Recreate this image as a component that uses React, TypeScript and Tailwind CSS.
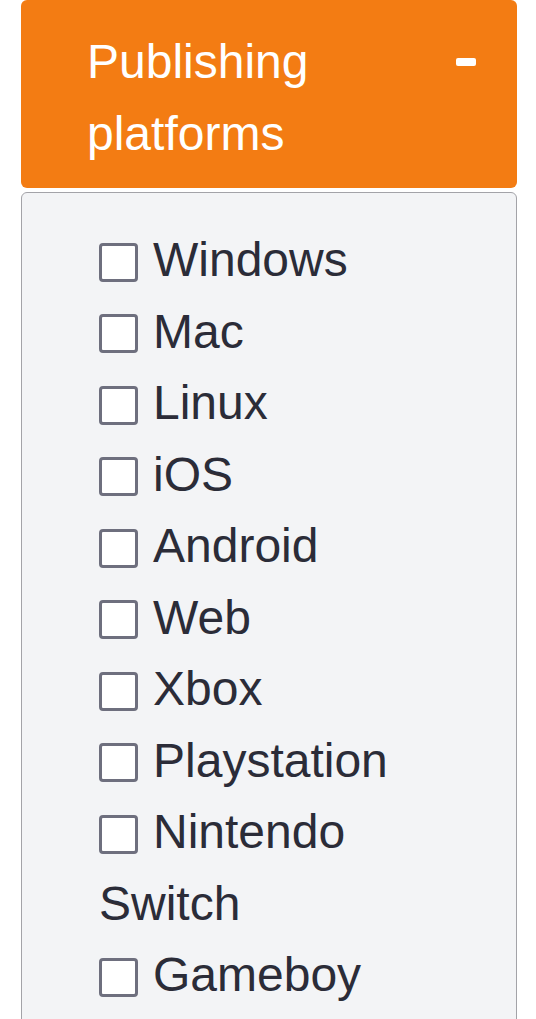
import React from 'react';

const PLATFORMS = [
    'Windows',
    'Mac',
    'Linux',
    'iOS',
    'Android',
    'Web',
    'Xbox',
    'Playstation',
    'Nintendo Switch',
    'Gameboy',
];

const App: React.FC = () => {
    return (
        <div className="min-h-screen bg-white pl-[21px] pr-[19px] font-['Liberation_Sans',Arial,sans-serif]">
            <div className="flex items-start justify-between rounded-[6px] bg-[#f37c13] pl-[66px] pr-[41px] pt-[26px] pb-[18px] text-[48px] leading-[72px] text-white">
                <h2 className="w-[260px]">Publishing platforms</h2>
                <span className="mt-[32px] block h-[8px] w-[20px] rounded-[2px] bg-white" aria-label="-"></span>
            </div>
            <div className="mt-[4px] rounded-t-[6px] border border-[#a3a3a8] bg-[#f3f4f6] pl-[77px] pr-[77px] pt-[31px] pb-[31px]">
                <ul className="text-[48px] leading-[71.5px] text-[#2b2c38]">
                    {PLATFORMS.map((name) => (
                        <li key={name}>
                            <label>
                                <span className="relative -top-[1px] mr-[15px] inline-block h-[39px] w-[39px] rounded-[4px] border-[3px] border-[#6e6f7e] bg-white align-middle"></span>
                                {name}
                            </label>
                        </li>
                    ))}
                </ul>
            </div>
        </div>
    );
};

export default App;
